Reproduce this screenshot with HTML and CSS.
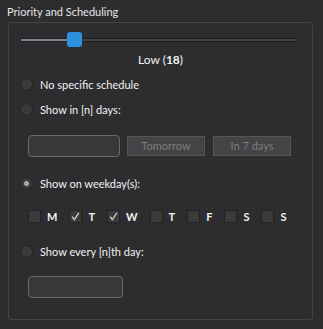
FILE: index.html
```html
<!DOCTYPE html>
<html>
<head>
<meta charset="utf-8">
<link rel="stylesheet" href="styles.css">
</head>
<body>
<div class="title">Priority and Scheduling</div>
<div class="group">
  <div class="slider">
    <div class="groove"><div class="fill"></div></div>
    <div class="handle"></div>
  </div>
  <div class="prio">Low (<b>18</b>)</div>
  <div class="row r1"><span class="radio"></span><span class="lbl">No specific schedule</span></div>
  <div class="row r2"><span class="radio"></span><span class="lbl">Show in [n] days:</span></div>
  <div class="inputs">
    <div class="input"></div>
    <div class="btn">Tomorrow</div>
    <div class="btn">In 7 days</div>
  </div>
  <div class="row r3"><span class="radio on"></span><span class="lbl">Show on weekday(s):</span></div>
  <div class="days">
    <div class="day"><span class="cb"></span><span>M</span></div>
    <div class="day"><span class="cb"><svg width="13" height="13" viewBox="0 0 13 13"><path d="M3.2 6.8 L5.4 9.6 L9.8 2.8" fill="none" stroke="#c9c9c9" stroke-width="1.4"/></svg></span><span>T</span></div>
    <div class="day"><span class="cb"><svg width="13" height="13" viewBox="0 0 13 13"><path d="M3.2 6.8 L5.4 9.6 L9.8 2.8" fill="none" stroke="#c9c9c9" stroke-width="1.4"/></svg></span><span>W</span></div>
    <div class="day"><span class="cb"></span><span>T</span></div>
    <div class="day"><span class="cb"></span><span>F</span></div>
    <div class="day"><span class="cb"></span><span>S</span></div>
    <div class="day"><span class="cb"></span><span>S</span></div>
  </div>
  <div class="row r4"><span class="radio"></span><span class="lbl">Show every [n]th day:</span></div>
  <div class="input input2"></div>
</div>
</body>
</html>
```
FILE: styles.css
```css
html, body {
  margin: 0;
  padding: 0;
  background: #2d2d2f;
  width: 323px;
  height: 329px;
  overflow: hidden;
  font-family: "Lato", "Liberation Sans", sans-serif;
  font-size: 11px;
  color: #f2f2f2;
}
.title {
  height: 22px;
  line-height: 24px;
  padding-left: 7px;
  color: #e6e6e6;
}
.group {
  box-sizing: border-box;
  margin-left: 8px;
  width: 305px;
  height: 298px;
  border: 1px solid #444446;
  border-radius: 3px;
  display: flex;
  flex-direction: column;
}
.slider {
  position: relative;
  margin: 9px 0 0 11px;
  width: 279px;
  height: 15px;
  display: flex;
  align-items: center;
}
.groove {
  width: 100%;
  height: 4px;
  box-sizing: border-box;
  background: #444446;
  border: 1px solid #1f1f20;
  border-radius: 1px;
  display: flex;
}
.fill {
  width: 50px;
  background: #7b8791;
}
.handle {
  position: absolute;
  left: 47px;
  top: 0;
  width: 15px;
  height: 15px;
  border-radius: 3px;
  background: #2b90dd;
}
.prio {
  margin-top: 5px;
  height: 16px;
  line-height: 16px;
  text-align: center;
  font-size: 12px;
}
.prio b { font-weight: 700; }
.row {
  display: flex;
  align-items: center;
  height: 16px;
  padding-left: 11px;
}
.r1 { margin-top: 8px; }
.r2 { margin-top: 9px; }
.r3 { margin-top: 18px; }
.r4 { margin-top: 19px; }
.radio {
  box-sizing: border-box;
  width: 13px;
  height: 13px;
  border-radius: 50%;
  background: #3a3a3c;
  border: 1px solid #222224;
  display: flex;
  align-items: center;
  justify-content: center;
}
.radio.on::after {
  content: "";
  width: 5px;
  height: 5px;
  border-radius: 50%;
  background: #a9a9a9;
}
.lbl { margin-left: 7px; }
.inputs {
  margin-top: 18px;
  padding-left: 19px;
  height: 22px;
  display: flex;
  align-items: center;
}
.input {
  box-sizing: border-box;
  width: 92px;
  height: 22px;
  border: 1px solid #6b6b6d;
  border-radius: 4px;
  background: #38383a;
}
.btn {
  box-sizing: border-box;
  width: 78px;
  height: 20px;
  margin-left: 7px;
  border: 1px solid #565658;
  background: #444446;
  color: #7c7c7e;
  text-align: center;
  line-height: 18px;
}
.btn + .btn { margin-left: 8px; }
.days {
  margin-top: 17px;
  height: 16px;
  padding-left: 19px;
  display: flex;
  align-items: center;
  gap: 12px;
  font-weight: 700;
}
.day {
  display: flex;
  align-items: center;
  gap: 6px;
}
.cb {
  box-sizing: border-box;
  width: 13px;
  height: 13px;
  background: #3a3a3c;
  border: 1px solid #232325;
  display: flex;
}
.cb svg { margin: -1px; }
.input2 {
  margin-top: 17px;
  margin-left: 19px;
  width: 95px;
}
```
